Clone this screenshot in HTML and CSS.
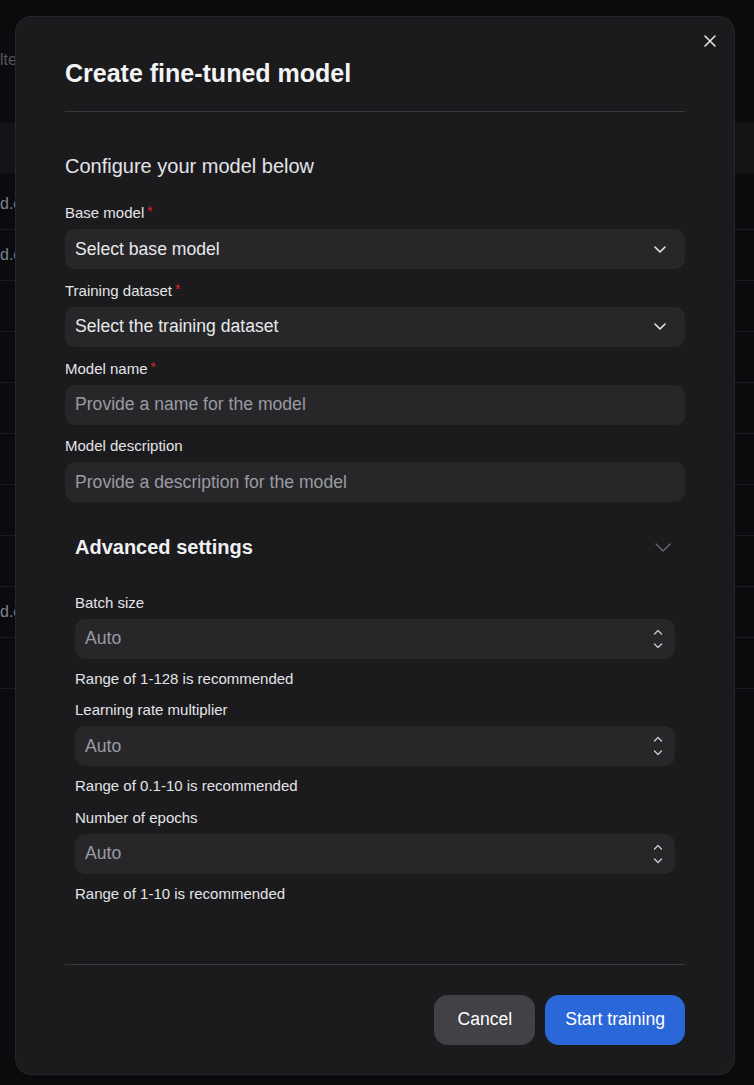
FILE: index.html
```html
<!DOCTYPE html>
<html lang="en">
<head>
<meta charset="utf-8">
<title>Create fine-tuned model</title>
<link rel="stylesheet" href="styles.css">
</head>
<body>
<div class="page">
  <div class="topbar"><span class="filter">lte</span></div>
  <div class="thead"></div>
  <div class="rows">
    <div class="row"><span class="cell">d.csv</span></div>
    <div class="row"><span class="cell">d.csv</span></div>
    <div class="row"></div>
    <div class="row"></div>
    <div class="row"></div>
    <div class="row"></div>
    <div class="row"></div>
    <div class="row"></div>
    <div class="row"><span class="cell">d.csv</span></div>
    <div class="row"></div>
  </div>
</div>

<div class="modal">
  <button class="close" aria-label="Close">
    <svg width="12" height="12" viewBox="0 0 12 12"><path d="M1 1 L11 11 M11 1 L1 11" stroke="#e4e4e7" stroke-width="1.6" fill="none" stroke-linecap="round"/></svg>
  </button>
  <div class="modal-header">
    <h2 class="title">Create fine-tuned model</h2>
  </div>
  <div class="modal-body">
    <p class="intro">Configure your model below</p>

    <label class="label first">Base model<span class="req">*</span></label>
    <div class="control select">
      <span>Select base model</span>
      <svg class="chev" width="12" height="7" viewBox="0 0 12 7"><path d="M1 1 L6 6 L11 1" stroke="#e4e4e7" stroke-width="1.6" fill="none" stroke-linecap="round" stroke-linejoin="round"/></svg>
    </div>

    <label class="label">Training dataset<span class="req">*</span></label>
    <div class="control select">
      <span>Select the training dataset</span>
      <svg class="chev" width="12" height="7" viewBox="0 0 12 7"><path d="M1 1 L6 6 L11 1" stroke="#e4e4e7" stroke-width="1.6" fill="none" stroke-linecap="round" stroke-linejoin="round"/></svg>
    </div>

    <label class="label">Model name<span class="req">*</span></label>
    <div class="control"><span class="ph">Provide a name for the model</span></div>

    <label class="label">Model description</label>
    <div class="control"><span class="ph">Provide a description for the model</span></div>

    <div class="adv">
      <div class="adv-head">
        <h3 class="adv-title">Advanced settings</h3>
        <svg width="16" height="9" viewBox="0 0 16 9"><path d="M1 1 L8 8 L15 1" stroke="#6e6e74" stroke-width="1.3" fill="none" stroke-linecap="round" stroke-linejoin="round"/></svg>
      </div>
      <div class="adv-body">
        <label class="label first-adv">Batch size</label>
        <div class="control number">
          <span class="ph">Auto</span>
          <svg class="spin" width="10" height="20" viewBox="0 0 10 20"><path d="M1.5 5 L5 1.5 L8.5 5 M1.5 15 L5 18.5 L8.5 15" stroke="#c9c9ce" stroke-width="1.4" fill="none" stroke-linecap="round" stroke-linejoin="round"/></svg>
        </div>
        <p class="help">Range of 1-128 is recommended</p>

        <label class="label adv-label">Learning rate multiplier</label>
        <div class="control number">
          <span class="ph">Auto</span>
          <svg class="spin" width="10" height="20" viewBox="0 0 10 20"><path d="M1.5 5 L5 1.5 L8.5 5 M1.5 15 L5 18.5 L8.5 15" stroke="#c9c9ce" stroke-width="1.4" fill="none" stroke-linecap="round" stroke-linejoin="round"/></svg>
        </div>
        <p class="help">Range of 0.1-10 is recommended</p>

        <label class="label adv-label">Number of epochs</label>
        <div class="control number">
          <span class="ph">Auto</span>
          <svg class="spin" width="10" height="20" viewBox="0 0 10 20"><path d="M1.5 5 L5 1.5 L8.5 5 M1.5 15 L5 18.5 L8.5 15" stroke="#c9c9ce" stroke-width="1.4" fill="none" stroke-linecap="round" stroke-linejoin="round"/></svg>
        </div>
        <p class="help">Range of 1-10 is recommended</p>
      </div>
    </div>
  </div>
  <div class="modal-footer">
    <button class="btn btn-cancel">Cancel</button>
    <button class="btn btn-primary">Start training</button>
  </div>
</div>
</body>
</html>
```

FILE: styles.css
```css
* { box-sizing: border-box; }

body {
  margin: 0;
  background: #0b0b0d;
  font-family: "Liberation Sans", Arial, sans-serif;
  height: 1085px;
  overflow: hidden;
}

/* background page */
.topbar {
  height: 123px;
  display: flex;
  align-items: center;
  padding-bottom: 4px;
}
.filter {
  font-size: 16px;
  color: #55555a;
}
.thead {
  height: 50px;
  background: #141416;
}
.rows { padding-top: 6px; }
.row {
  height: 51px;
  border-bottom: 1px solid #1c1c20;
  display: flex;
  align-items: center;
}
.cell {
  font-size: 16px;
  color: #7b8290;
}

/* modal */
.modal {
  position: absolute;
  top: 16px;
  left: 15px;
  width: 720px;
  background: #1b1b1e;
  border: 1px solid #27272b;
  border-radius: 16px;
  padding: 0 49px 29px;
}
.close {
  position: absolute;
  top: 12px;
  right: 12px;
  width: 24px;
  height: 24px;
  padding: 0;
  border: 0;
  background: none;
  display: flex;
  align-items: center;
  justify-content: center;
}
.modal-header {
  padding: 42px 0 23px;
  border-bottom: 1px solid #38383d;
}
.title {
  margin: 0;
  font-size: 25px;
  line-height: 29px;
  font-weight: 700;
  color: #f4f4f5;
}
.modal-body { padding-top: 43px; }
.intro {
  margin: 0;
  font-size: 20px;
  line-height: 23px;
  color: #e4e4e7;
}
.label {
  display: block;
  font-size: 15px;
  line-height: 17px;
  color: #e4e4e7;
  margin: 12.8px 0 8px;
}
.label.first { margin-top: 26px; }
.req {
  color: #dc2626;
  margin-left: 3px;
  font-size: 14px;
  vertical-align: top;
  position: relative;
  top: -1px;
}
.control {
  height: 40px;
  border-radius: 10px;
  background: #27272a;
  display: flex;
  align-items: center;
  padding: 0 19px 0 10px;
  font-size: 17.6px;
  color: #e8e8ea;
}
.control .chev { margin-left: auto; }
.ph { color: #9a9aa2; }

.adv-head {
  display: flex;
  justify-content: space-between;
  align-items: center;
  padding: 34px 14px 0 10px;
}
.adv-title {
  margin: 0;
  font-size: 20px;
  line-height: 23px;
  font-weight: 700;
  color: #f0f0f2;
}
.adv-body { padding: 0 10px; }
.label.first-adv { margin-top: 34.5px; }
.label.adv-label { margin-top: 14.5px; }
.control.number { padding-right: 12px; }
.control.number .spin { margin-left: auto; }
.help {
  margin: 11px 0 0;
  font-size: 15px;
  line-height: 17px;
  color: #e4e4e7;
}

.modal-footer {
  margin-top: 62px;
  border-top: 1px solid #38383d;
  padding-top: 30px;
  display: flex;
  justify-content: flex-end;
  gap: 10px;
}
.btn {
  height: 50px;
  border: 0;
  border-radius: 14px;
  font-family: "Liberation Sans", Arial, sans-serif;
  font-size: 17.6px;
  color: #ffffff;
  padding: 0 20px;
}
.btn-cancel {
  background: #414146;
  padding: 0 23px;
}
.btn-primary { background: #2a67d8; }
```
